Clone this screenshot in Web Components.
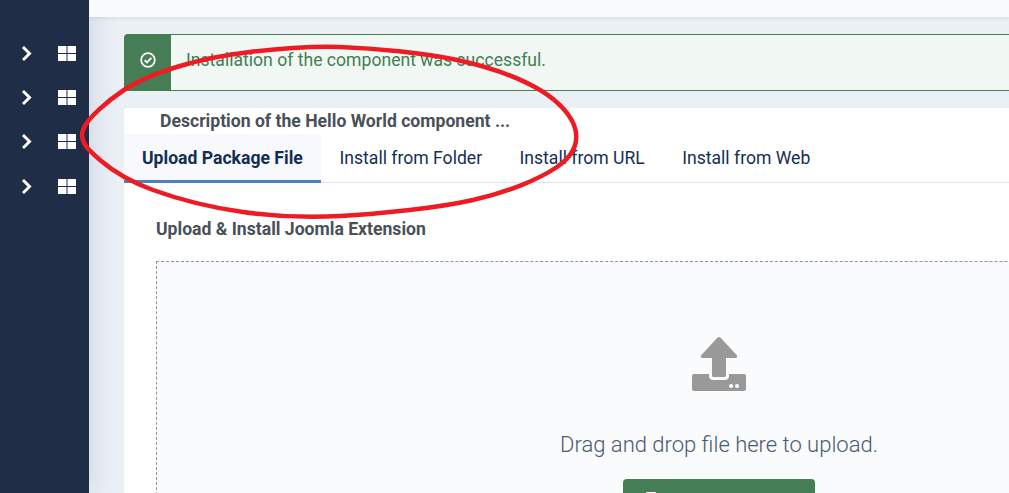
<!DOCTYPE html>
<html lang="en">
<head>
<meta charset="utf-8">
<title>Install Extensions</title>
<style>
  html, body { margin: 0; height: 100%; overflow: hidden; }
  body { font-family: Roboto, "Liberation Sans", sans-serif; background: #ebf0f5; }
</style>
</head>
<body>
<admin-shell>
  <side-item slot="side"></side-item>
  <side-item slot="side"></side-item>
  <side-item slot="side"></side-item>
  <side-item slot="side"></side-item>
  <success-alert>Installation of the component was successful.</success-alert>
  <install-card heading="Description of the Hello World component ...">
    <tab-bar active="0" tabs="Upload Package File|Install from Folder|Install from URL|Install from Web"></tab-bar>
    <upload-panel title="Upload &amp; Install Joomla Extension"></upload-panel>
  </install-card>
</admin-shell>
<red-circle></red-circle>

<script>
// Page frame: dark sidebar, pale header strip, content column.
class AdminShell extends HTMLElement {
  constructor() {
    super();
    this.attachShadow({ mode: "open" }).innerHTML = `
      <style>
        :host { display: flex; width: 1009px; height: 493px; overflow: hidden; }
        .side {
          width: 89px; flex: none; background: #1f2d46;
          display: flex; flex-direction: column; padding-top: 31px; box-sizing: border-box;
          box-shadow: 4px 0 24px rgba(60, 90, 150, .16);
        }
        .main { flex: 1; min-width: 0; display: flex; flex-direction: column; }
        .top { height: 17px; flex: none; background: #fafbfd; box-shadow: 0 1px 4px rgba(40, 60, 100, .12); }
        .content { padding: 17px 0 0 35px; box-sizing: border-box; width: 1200px; }
      </style>
      <div class="side"><slot name="side"></slot></div>
      <div class="main">
        <div class="top"></div>
        <div class="content"><slot></slot></div>
      </div>`;
  }
}

class SideItem extends HTMLElement {
  constructor() {
    super();
    this.attachShadow({ mode: "open" }).innerHTML = `
      <style>
        :host { display: flex; align-items: center; height: 44.3px; padding-left: 22px; }
        svg { display: block; fill: #fff; }
        .chev { margin-right: 26px; }
      </style>
      <svg class="chev" width="10" height="15" viewBox="0 0 10 15">
        <path d="M0 2 2 0 9.600 7.500 2 15 0 13 5.500 7.500z"/>
      </svg>
      <svg width="18" height="15" viewBox="0 0 18 15">
        <rect x="0" y="0" width="8.500" height="7"/><rect x="9.500" y="0" width="8.500" height="7"/>
        <rect x="0" y="8" width="8.500" height="7"/><rect x="9.500" y="8" width="8.500" height="7"/>
      </svg>`;
  }
}

class SuccessAlert extends HTMLElement {
  constructor() {
    super();
    this.attachShadow({ mode: "open" }).innerHTML = `
      <style>
        :host {
          display: flex; height: 57px; box-sizing: border-box; margin-bottom: 17px;
          background: #f1f7f2; border: 1px solid #457d54; border-right: 0; border-radius: 4px 0 0 4px;
          color: #457d54; font-size: 17.6px;
        }
        .ico { width: 46px; flex: none; background: #457d54; display: grid; place-items: center; padding-bottom: 5px; box-sizing: border-box; }
        .txt { padding-left: 15px; line-height: 51px; white-space: nowrap; }
      </style>
      <div class="ico">
        <svg width="16" height="16" viewBox="0 0 16 16" fill="none" stroke="#fff">
          <circle cx="8" cy="8" r="6.8" stroke-width="1.7"/>
          <path d="M4.700 8.200 7 10.400 11.300 5.900" stroke-width="2"/>
        </svg>
      </div>
      <div class="txt"><slot></slot></div>`;
  }
}

class InstallCard extends HTMLElement {
  static get observedAttributes() { return ["heading"]; }
  constructor() {
    super();
    this.attachShadow({ mode: "open" }).innerHTML = `
      <style>
        :host { display: block; background: #fff; border-radius: 4px 0 0 0; }
        .head {
          height: 26px; padding-left: 36px; font-size: 17.6px; font-weight: 700;
          color: #495057; line-height: 26px; white-space: nowrap;
        }
      </style>
      <div class="head"></div>
      <slot></slot>`;
  }
  attributeChangedCallback(name, old, value) {
    this.shadowRoot.querySelector(".head").textContent = value;
  }
}

class TabBar extends HTMLElement {
  connectedCallback() {
    const tabs = this.getAttribute("tabs").split("|");
    const active = Number(this.getAttribute("active"));
    const root = this.attachShadow({ mode: "open" });
    root.innerHTML = `
      <style>
        :host { display: flex; height: 49px; box-sizing: border-box; border-bottom: 1px solid #dfe3ef; }
        .tab {
          height: 49px; box-sizing: border-box; padding: 0 18.700px; font-size: 17.6px; line-height: 48px;
          color: #132f53; white-space: nowrap;
        }
        .tab.on { padding: 0 18px; background: #f8f9fc; font-weight: 700; border-bottom: 3px solid #4f7fbf; }
      </style>`;
    tabs.forEach((text, i) => {
      const tab = document.createElement("div");
      tab.className = i === active ? "tab on" : "tab";
      tab.textContent = text;
      root.appendChild(tab);
    });
  }
}

class UploadPanel extends HTMLElement {
  connectedCallback() {
    this.attachShadow({ mode: "open" }).innerHTML = `
      <style>
        :host { display: block; padding: 35px 0 0 32px; }
        h2 {
          margin: 0 0 21px; font-size: 17.6px; line-height: 22px; font-weight: 700; color: #495057;
          white-space: nowrap;
        }
        .drop {
          height: 400px; box-sizing: border-box; background: #fafbfd;
          border: 1px dashed #8f9399;
          width: 1126px; padding-top: 75px;
          display: flex; flex-direction: column; align-items: center;
        }
        svg { display: block; fill: #999; }
        p { margin: 37px 0 18px; font-size: 22px; line-height: 33px; font-weight: 300; color: #495a6e; white-space: nowrap; }
        .btn {
          width: 192px; height: 46px; background: #457d54; border-radius: 4px; flex: none;
          box-sizing: border-box; padding: 13px 0 0 23px;
        }
        .btn i { display: block; width: 10px; height: 10px; background: #fff; border-radius: 1px; }
      </style>
      <h2>${this.getAttribute("title")}</h2>
      <div class="drop">
        <svg width="54" height="54" viewBox="0 0 54 54">
          <path d="M27 0c.5 0 1 .2 1.400.6L44.800 18.300C45.800 19.500 45.100 21 43.700 21H34V38.500C34 39.400 33.300 40 32.500 40H21.500C20.700 40 20 39.400 20 38.500V21H10.300C8.900 21 8.200 19.500 9.200 18.300L25.600.6C26 .2 26.500 0 27 0z"/>
          <path fill-rule="evenodd" d="M2 37H17V39C17 41.500 18.800 43 21 43H33C35.200 43 37 41.500 37 39V37H52C53.100 37 54 37.900 54 39V52C54 53.100 53.100 54 52 54H2C.9 54 0 53.100 0 52V39C0 37.900 .9 37 2 37zM37 49A2.100 2.100 0 1 0 41.200 49 2.100 2.100 0 1 0 37 49zM43 49A2.100 2.100 0 1 0 47.200 49 2.100 2.100 0 1 0 43 49z"/>
        </svg>
        <p>Drag and drop file here to upload.</p>
        <div class="btn"><i></i></div>
      </div>`;
  }
}

// Red freehand ring drawn over the finished screenshot.
class RedCircle extends HTMLElement {
  constructor() {
    super();
    this.attachShadow({ mode: "open" }).innerHTML = `
      <style>
        :host { position: absolute; left: 0; top: 0; width: 1009px; height: 493px; pointer-events: none; }
        svg { display: block; }
      </style>
      <svg width="1009" height="493" viewBox="0 0 1009 493" fill="none">
        <path stroke="#ed1c24" stroke-width="4.500" stroke-linejoin="round"/>
      </svg>`;
    // points read off the reference, clockwise from the top
    const pts = [[340, 47], [457, 60], [540, 90], [575.5, 130], [557, 167], [473, 200], [340, 216],
      [243, 212], [153, 190], [100, 160], [83, 130], [124, 90], [180, 66], [250, 52]];
    const n = pts.length;
    let d = `M${pts[0]}`;
    for (let i = 0; i < n; i++) {
      const [p0, p1, p2, p3] = [pts[(i + n - 1) % n], pts[i], pts[(i + 1) % n], pts[(i + 2) % n]];
      d += `C${p1[0] + (p2[0] - p0[0]) / 6} ${p1[1] + (p2[1] - p0[1]) / 6} ` +
        `${p2[0] - (p3[0] - p1[0]) / 6} ${p2[1] - (p3[1] - p1[1]) / 6} ${p2[0]} ${p2[1]}`;
    }
    this.shadowRoot.querySelector("path").setAttribute("d", d + "z");
  }
}

customElements.define("admin-shell", AdminShell);
customElements.define("side-item", SideItem);
customElements.define("success-alert", SuccessAlert);
customElements.define("install-card", InstallCard);
customElements.define("tab-bar", TabBar);
customElements.define("upload-panel", UploadPanel);
customElements.define("red-circle", RedCircle);
</script>
</body>
</html>
